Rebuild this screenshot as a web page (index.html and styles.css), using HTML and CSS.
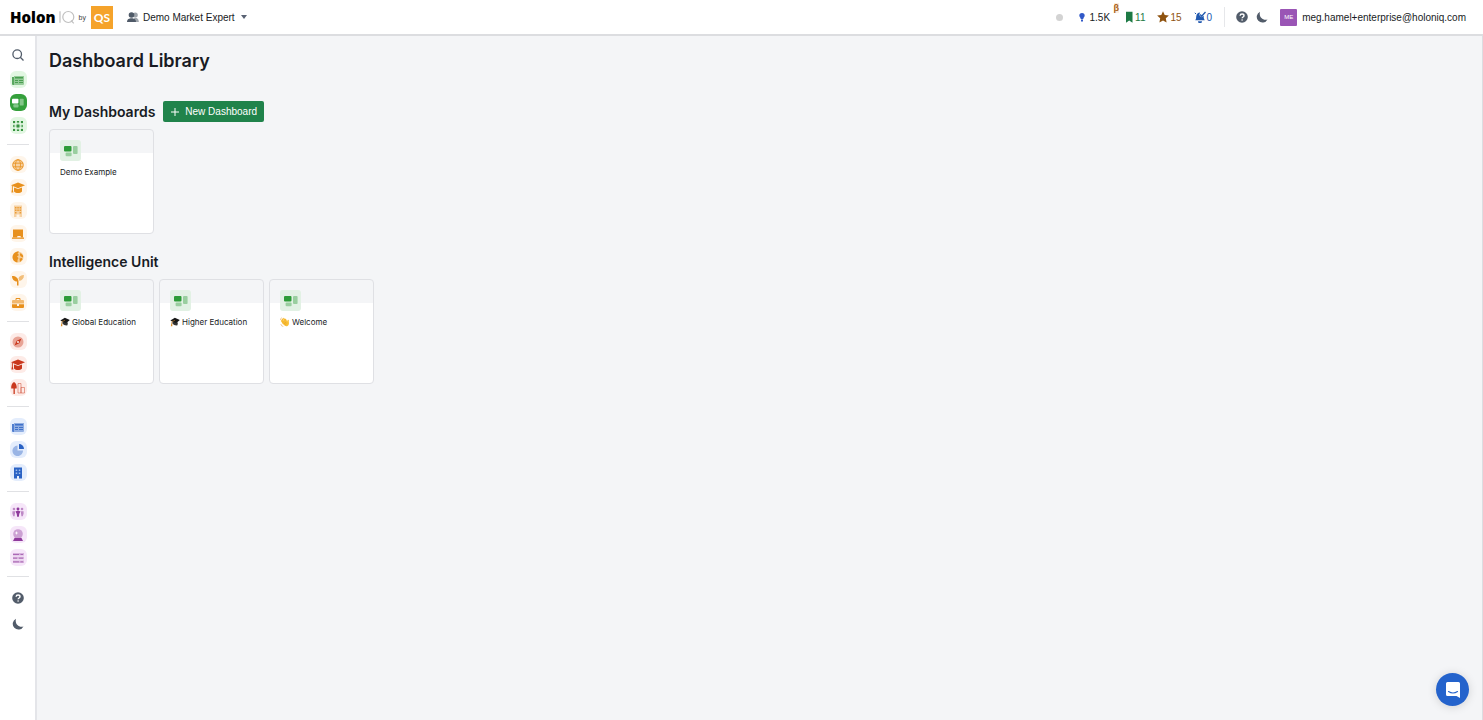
FILE: index.html
```
<!DOCTYPE html>
<html lang="en">
<head>
  <meta charset="UTF-8">
  <meta name="viewport" content="width=device-width, initial-scale=1">
  <title>Dashboard Library</title>
  <link rel="stylesheet" href="styles.css">
</head>
<body>
  <!-- shared icons -->
  <svg class="sprite" aria-hidden="true">
    <symbol id="dashboard" viewBox="0 0 14 12">
      <rect x="0" y="1" width="7.5" height="5.5" rx="1"/>
      <rect x="9" y="1" width="4.6" height="8" rx="1" opacity=".4"/>
      <rect x="1.6" y="7.6" width="6" height="3.6" rx="1" opacity=".4"/>
    </symbol>
    <symbol id="news" viewBox="0 0 12 12">
      <path d="M0 3h2v8H1a1 1 0 0 1-1-1z" opacity=".8"/>
      <path d="M2 2h10v8a1 1 0 0 1-1 1H2z" opacity=".45"/>
      <path d="M3 3h8v1.600H3zM3 6h3v1H3zM7 6h4v1H7zM3 8h3v1H3zM7 8h4v1H7z" opacity=".8"/>
    </symbol>
    <symbol id="cap" viewBox="0 0 14 12">
      <path d="M7 .5 14 3.300 7 6.200 0 3.300z"/>
      <path d="M3 5.400 7 7l4-1.600v4c-2 2-6 2-8 0z"/>
      <path d="M.9 4h.9v3.400l.6 3H.4l.5-3z"/>
    </symbol>
    <symbol id="help" viewBox="0 0 12 12">
      <circle cx="6" cy="6" r="5.800"/>
      <path d="M4.100 4.700C4.200 2.400 8 2.400 8 4.700 8 6 6.100 6 6.100 7.300" fill="none" stroke="#fff" stroke-width="1.400"/>
      <circle cx="6.100" cy="9" r=".8" fill="#fff"/>
    </symbol>
    <symbol id="moon" viewBox="0 0 12 12">
      <path d="M4 .7A5.700 5.700 0 1 0 11.500 8.500C7 10 2.500 6 4 .7z"/>
    </symbol>
    <symbol id="grad" viewBox="0 0 12 12">
      <path d="M2.800 5.500 9.500 6.500 9 10Q5 10.500 3 8z" fill="#343434"/>
      <path d="M.4 4.300 5.800 1 11.800 3.500 7.300 7.500z" fill="#171717"/>
      <path d="M6 4 2.200 5.500 2 8.500" fill="none" stroke="#c07a20" stroke-width=".7"/>
      <path d="M1.500 8h1.200l.1 3H1z" fill="#d98a22"/>
    </symbol>
  </svg>

  <header class="topbar">
    <a class="logo" href="#" aria-label="Holon IQ by QS">
      <span class="logo-name">Holon</span>
      <svg class="logo-iq" viewBox="0 0 16 16"><path d="M1 2.200v11.600M12 11.500 14.800 14.300"/><circle cx="9.300" cy="8" r="5.500"/></svg>
      <span class="logo-by">by</span>
      <span class="logo-qs">QS</span>
    </a>
    <button class="workspace" type="button">
      <svg class="icon-people" viewBox="0 0 12 12">
        <g opacity=".55"><circle cx="8.300" cy="4" r="2.500"/><path d="M7 7c3-.8 4.800 1 4.800 4H8z"/></g>
        <circle cx="4.500" cy="4" r="2.800"/><path d="M0 11C0 8 2.200 7.200 4.500 7.200S9 8 9 11z"/>
      </svg>
      Demo Market Expert
      <span class="caret"></span>
    </button>

    <div class="topbar-right">
      <span class="status"></span>
      <a class="stat credits" href="#">
        <svg viewBox="0 0 8 12" class="icon-bulb"><path d="M4 2a2.700 2.700 0 0 1 2.700 2.700C6.700 6 5.300 6.500 5.300 8H2.700C2.700 6.500 1.300 6 1.300 4.700A2.700 2.700 0 0 1 4 2z"/><path d="M3 8.500h2V10L4 11 3 10z"/></svg>
        1.5K<sup class="beta">β</sup>
      </a>
      <a class="stat saved" href="#">
        <svg viewBox="0 0 8 12" class="icon-mark"><path d="M1 .8h6.500v11L4.200 9.500 1 11.800z"/></svg>
        11
      </a>
      <a class="stat starred" href="#">
        <svg viewBox="0 0 12 12"><path d="m6 .2 1.700 3.700 4.200.5-3.100 2.800.8 4.300L6 9.400l-3.600 2.100.8-4.300L.1 4.400l4.200-.5z"/></svg>
        15
      </a>
      <a class="stat alerts" href="#">
        <svg viewBox="0 0 12 12"><path d="M1.200 9.300C2.300 8 2 7 2.300 5 2.600 2.800 4 1.600 6 1.500L5.300 4l2 2.200 2.500-1.400C9.500 7 10 8 10.800 9.300z"/><path d="M4 10.200h4a2 2 0 0 1-4 0z"/><path d="m6.200 3.500 1.500 1.700L11.500 1" fill="none" stroke="currentColor" stroke-width="1.300"/><path d="M.8 1.800 2 3" stroke="currentColor"/></svg>
        0
      </a>
      <span class="divider"></span>
      <button class="tool" type="button" aria-label="Help"><svg><use href="#help"/></svg></button>
      <button class="tool" type="button" aria-label="Dark mode"><svg><use href="#moon"/></svg></button>
      <button class="account" type="button"><span class="avatar">ME</span>meg.hamel+enterprise@holoniq.com</button>
    </div>
  </header>

  <div class="layout">
    <nav class="sidebar" aria-label="Main">
      <a class="nav-tool" href="#" aria-label="Search"><svg viewBox="0 0 12 12" class="icon-search"><circle cx="5.200" cy="5.200" r="4.300"/><path d="m8.300 8.300 3.200 3.200"/></svg></a>
      <div class="nav-group green">
        <a href="#" aria-label="News"><span><svg><use href="#news"/></svg></span></a>
        <a href="#" class="active" aria-label="Dashboards"><span><svg><use href="#dashboard"/></svg></span></a>
        <a href="#" aria-label="Network"><span><svg viewBox="0 0 12 12"><path d="M1 1h2v2H1zM5 1h2v1.500H5zM9 1h2v2H9zM1 5.200h1.500v1.600H1zM4.500 4.500h3v3h-3zM9.500 5.200H11v1.600H9.500zM1 9h2v2H1zM5 9.500h2V11H5zM9 9h2v2H9z"/><path d="M2 2h8v8H2zM6 2v8M2 6h8" fill="none" stroke="currentColor" stroke-width=".5" opacity=".5"/></svg></span></a>
      </div>
      <div class="nav-group orange">
        <a href="#" aria-label="Global"><span><svg viewBox="0 0 12 12"><circle cx="6" cy="6" r="5.500" opacity=".35"/><g fill="none" stroke="currentColor" stroke-width=".8"><circle cx="6" cy="6" r="5.300"/><ellipse cx="6" cy="6" rx="2.500" ry="5.300"/><path d="M1 4.200h10M1 7.800h10"/></g></svg></span></a>
        <a href="#" aria-label="Education"><span><svg class="wide"><use href="#cap"/></svg></span></a>
        <a href="#" aria-label="Companies"><span><svg viewBox="0 0 12 12"><path d="M2 .5h8V12H7.500V9.500h-3V12H2z" opacity=".35"/><path d="M3 2h1.500v1.500H3zM5.300 2h1.500v1.500H5.300zM7.600 2h1.500v1.500H7.600zM3 4.500h1.500V6H3zM5.300 4.500h1.500V6H5.300zM7.600 4.500h1.500V6H7.600zM3 7h1.500v1.500H3zM7.600 7h1.500v1.500H7.600z" opacity=".8"/></svg></span></a>
        <a href="#" aria-label="Classroom"><span><svg viewBox="0 0 12 12"><path d="M1 1.500h10v8H9L8.500 8h-3L5 9.500H1z"/><path d="M0 9.500h12v1.300H0z"/></svg></span></a>
        <a href="#" aria-label="Regions"><span><svg viewBox="0 0 12 12"><circle cx="6" cy="6" r="5.500" opacity=".4"/><path d="M2 2.500C4 .5 6 .3 7 .7L5.500 2.500 7 4 5 5.500 6.500 7 5.500 9 5.500 11.300C1 11-1 6 2 2.500zM8.500 2 11 4.500 11 6.500 9 5.500 7.800 4zM7.500 7.500l2.500-.5.5 1.500L8 11z"/></svg></span></a>
        <a href="#" aria-label="Climate"><span><svg viewBox="0 0 12 12"><path d="M0 2c4 0 6 2 6.500 5v4.500H5V7.500C2 7.500 0 5 0 2z"/><path d="M12 1C9 1 7 2.500 6.500 4.500L7.500 7C10 6.500 12 4 12 1z" opacity=".55"/></svg></span></a>
        <a href="#" aria-label="Workforce"><span><svg viewBox="0 0 12 12"><path d="M0 4a1 1 0 0 1 1-1h10a1 1 0 0 1 1 1v2.500H0z" opacity=".6"/><path d="M0 7.300h5V9h2V7.300h5V10a1 1 0 0 1-1 1H1a1 1 0 0 1-1-1z"/><path d="M4 3V1.500h4V3" fill="none" stroke="currentColor"/></svg></span></a>
      </div>
      <div class="nav-group red">
        <a href="#" aria-label="Explore"><span><svg viewBox="0 0 12 12"><circle cx="6" cy="6" r="5.500" opacity=".4"/><path d="M9.500 2.500 7.300 7.300 2.500 9.500l2.200-4.800z"/><circle cx="6" cy="6" r=".9" fill="#fff"/></svg></span></a>
        <a href="#" aria-label="Higher education"><span><svg class="wide"><use href="#cap"/></svg></span></a>
        <a href="#" aria-label="Cities"><span><svg class="wide" viewBox="0 0 14 12"><path d="M3 0c2 1 3 3.500 2.700 6.500H3.800V12H2.500V6.500H.2C0 3.500 1 1 3 0z"/><path d="M7 1.500h3V11H7zM10 5.500h3.500V11H10z" fill="none" stroke="currentColor" opacity=".45"/></svg></span></a>
      </div>
      <div class="nav-group blue">
        <a href="#" aria-label="Briefings"><span><svg><use href="#news"/></svg></span></a>
        <a href="#" aria-label="Charts"><span><svg viewBox="0 0 12 12"><path d="M5.500 1.500v5h5.500A5.300 5.300 0 1 1 5.500 1.500z" opacity=".4"/><path d="M7 0a5 5 0 0 1 5 5H7z"/></svg></span></a>
        <a href="#" aria-label="Organisations"><span><svg viewBox="0 0 12 12"><path d="M2 .5h8v11H7V9H5v2.500H2z"/><path d="M3.700 2.500h1.500V4H3.700zM6.800 2.500h1.500V4H6.800zM3.700 5.500h1.500V7H3.700zM6.800 5.500h1.500V7H6.800z" fill="#9fbdec"/></svg></span></a>
      </div>
      <div class="nav-group purple">
        <a href="#" aria-label="Community"><span><svg viewBox="0 0 14 12"><g opacity=".55"><circle cx="2.300" cy="2.500" r="1.500"/><path d="M.5 5h3v2.500L3 11H1.500L.5 8z"/><circle cx="11.700" cy="2.500" r="1.500"/><path d="M10.500 5h3v3l-1 3H11l-.5-3.500z"/></g><circle cx="7" cy="2.500" r="1.700"/><path d="M4 5.300c2-1 4-1 6 0L8.500 8 8 11.500H6L5.500 8z"/></svg></span></a>
        <a href="#" aria-label="Forecasts"><span><svg viewBox="0 0 12 12"><circle cx="6" cy="5" r="4.800" opacity=".4"/><path d="M2.500 9h7l1.500 3H1z"/><path d="m4.500 2 .5 1.500 1.500.5L5 4.500 4.500 6 4 4.500 2.500 4 4 3.500z" fill="#fff"/></svg></span></a>
        <a href="#" aria-label="Surveys"><span><svg viewBox="0 0 12 12"><path d="M1 1h11v2.500H1zM1 4.800h11v2.500H1zM1 8.600h11v2.500H1z" opacity=".3"/><path d="M1 1.900h6v.8H1zM1 5.700h4v.8H1zM1 9.500h6v.8H1zM8.500 1.900H11v.8H8.500zM7 5.700h4v.8H7zM8.500 9.500H11v.8H8.500z" opacity=".8"/></svg></span></a>
      </div>
      <div class="nav-group">
        <a class="nav-tool" href="#" aria-label="Help"><svg><use href="#help"/></svg></a>
        <a class="nav-tool" href="#" aria-label="Dark mode"><svg><use href="#moon"/></svg></a>
      </div>
    </nav>

    <main class="content">
      <h1>Dashboard Library</h1>

      <section>
        <div class="section-head">
          <h2>My Dashboards</h2>
          <button class="btn-new" type="button">
            <svg viewBox="0 0 10 10"><path d="M5 1v8M1 5h8"/></svg>
            New Dashboard
          </button>
        </div>
        <div class="cards">
          <a class="card" href="#">
            <span class="tile"><svg><use href="#dashboard"/></svg></span>
            <span class="card-name">Demo Example</span>
          </a>
        </div>
      </section>

      <section>
        <div class="section-head">
          <h2>Intelligence Unit</h2>
        </div>
        <div class="cards">
          <a class="card" href="#">
            <span class="tile"><svg><use href="#dashboard"/></svg></span>
            <span class="card-name"><svg><use href="#grad"/></svg>Global Education</span>
          </a>
          <a class="card" href="#">
            <span class="tile"><svg><use href="#dashboard"/></svg></span>
            <span class="card-name"><svg><use href="#grad"/></svg>Higher Education</span>
          </a>
          <a class="card" href="#">
            <span class="tile"><svg><use href="#dashboard"/></svg></span>
            <span class="card-name">
              <svg viewBox="0 0 12 12">
                <path d="M4 8 1.800 4.500M5 7 2.700 2.500M6.500 6 4.500 1.800M8 6 6.500 2.800M9.500 7.500 9.800 4" fill="none" stroke="#f7b92f" stroke-width="1.600" stroke-linecap="round"/>
                <path d="M3 6.500 7.500 4.500 10.300 6Q11.500 10 8.500 11 5 11.500 3 6.500z" fill="#f9bf35"/>
                <path d="M4 7 7.300 9M5 5.500 8 7.500" stroke="#d98f1b" stroke-width=".5"/>
                <path d="M.5 3.500Q.6 1.500 2 .8M1 8.500Q1.500 11 4 11.500" fill="none" stroke="#e7a04a" stroke-width=".7"/>
              </svg>Welcome</span>
          </a>
        </div>
      </section>
    </main>
  </div>

  <button class="chat" type="button" aria-label="Open chat">
    <svg viewBox="0 0 16 18"><path d="M2.500 1h11A1.500 1.500 0 0 1 15 2.500V17l-3.500-2h-9A1.500 1.500 0 0 1 1 13.500v-11A1.500 1.500 0 0 1 2.500 1z" fill="#fff"/><path d="M3.500 10.500q4.500 3 9 0" fill="none" stroke="#2463cc" stroke-width="1.100" stroke-linecap="round"/></svg>
  </button>
</body>
</html>
```

FILE: styles.css
```
* {
  box-sizing: border-box;
}
body {
  margin: 0;
  min-height: 100vh;
  display: flex;
  flex-direction: column;
  font-family: "Liberation Sans", Arial, sans-serif;
  font-size: 10px;
  color: #181b24;
  background-color: #f4f5f7;
}
a {
  color: inherit;
  text-decoration: none;
}
button {
  font: inherit;
  color: inherit;
  background: none;
  border: 0;
  padding: 0;
  cursor: pointer;
}
svg {
  display: block;
  width: 12px;
  height: 12px;
  fill: currentColor;
}
.sprite {
  position: absolute;
  width: 0;
  height: 0;
}

/* top bar */
.topbar {
  display: flex;
  align-items: center;
  height: 36px;
  padding: 0 17px 0 10px;
  background: #fff;
  border-bottom: 2px solid #dcdde0;
}
.logo {
  display: flex;
  align-items: center;
  margin-right: 14px;
}
.logo-name {
  font: 800 15px/20px "Open Sans", sans-serif;
  color: #000;
}
.logo-iq {
  width: 16px;
  height: 16px;
  margin-left: 3px;
  fill: none;
  stroke: #c0c0c0;
  stroke-width: 1.2;
}
.logo-by {
  margin: 0 5px 0 4px;
  font-size: 7px;
  color: #444;
}
.logo-qs {
  width: 22px;
  height: 23px;
  background: #f5a32b;
  color: #fff;
  font: 700 12px/23px Lato, sans-serif;
  text-align: center;
}
.workspace {
  display: flex;
  align-items: center;
  gap: 4px;
}
.icon-people {
  color: #4f5a68;
}
.caret {
  margin-left: 2px;
  border: 3px solid transparent;
  border-top: 4px solid #596273;
  border-bottom: 0;
}
.topbar-right {
  display: flex;
  align-items: center;
  margin-left: auto;
}
.status {
  width: 7px;
  height: 7px;
  margin-right: 15px;
  border-radius: 50%;
  background: #d3d3d3;
}
.stat {
  position: relative;
  display: flex;
  align-items: center;
  gap: 1px;
  margin-right: 12px;
}
.icon-bulb,
.icon-mark {
  width: 8px;
}
.credits {
  gap: 3px;
}
.saved {
  gap: 2px;
}
.credits svg {
  color: #3058c8;
}
.beta {
  position: absolute;
  top: -8px;
  right: -6px;
  font-size: 9px;
  line-height: 10px;
  font-weight: 600;
  color: #a85e16;
  background: #fdeedd;
}
.saved {
  color: #1d7a45;
}
.starred {
  color: #8f5310;
}
.alerts {
  color: #2159b0;
}
.divider {
  height: 20px;
  border-left: 1px solid #e6e7ea;
}
.tool {
  margin-left: 8px;
  color: #525c6a;
}
.tool:first-of-type {
  margin-left: 11px;
}
.account {
  display: flex;
  align-items: center;
  gap: 5px;
  margin-left: 12px;
}
.avatar {
  width: 17px;
  height: 17px;
  border-radius: 1px;
  background: #9a55b5;
  color: #fff;
  font-size: 6px;
  line-height: 17px;
}

/* side navigation */
.layout {
  display: flex;
  flex: 1;
}
.sidebar {
  flex: none;
  width: 37px;
  padding-top: 6px;
  background: #fff;
  border-right: 2px solid #e4e5e9;
}
.nav-group {
  padding: 8px 0 7px;
}
.nav-group::before {
  content: "";
  display: block;
  height: 1px;
  margin: -8px 6px 8px 7px;
  background: #e0e1e4;
}
.nav-group.green {
  padding-top: 0;
}
.nav-group.green::before {
  display: none;
}
.nav-group a {
  display: flex;
  align-items: center;
  justify-content: center;
  height: 23px;
  padding-left: 1px;
}
.nav-group span {
  display: flex;
  align-items: center;
  justify-content: center;
  width: 17px;
  height: 17px;
  border-radius: 6px;
}
.nav-group .wide {
  width: 14px;
}
.sidebar a.nav-tool {
  display: flex;
  align-items: center;
  justify-content: center;
  height: 26px;
  padding-left: 1px;
  color: #525c6a;
}
.icon-search {
  fill: none;
  stroke: currentColor;
  stroke-width: 1.3;
}
.green {
  color: #37943f;
}
.green span {
  background: #e2f7e2;
}
.green .active span {
  background: #35a03c;
  color: #fff;
}
.orange {
  color: #e8901c;
}
.orange span {
  background: #fef5ea;
}
.red {
  color: #c9371c;
}
.red span {
  background: #fdebe7;
}
.blue {
  color: #2a62c4;
}
.blue span {
  background: #e4edfc;
}
.purple {
  color: #8f3a9c;
}
.purple span {
  background: #f6e6f9;
}

/* page */
.content {
  flex: 1;
  padding: 13px 12px;
  border-right: 1px solid #dcdde1;
}
h1,
h2,
.card-name {
  font-family: Inter, "Liberation Sans", sans-serif;
}
h1 {
  margin: 0 0 28px;
  font-size: 18px;
  line-height: 24px;
  font-weight: 600;
}
h2 {
  margin: 0;
  font-size: 14px;
  line-height: 21px;
  font-weight: 600;
}
section {
  margin-bottom: 17px;
}
.section-head {
  display: flex;
  align-items: center;
  gap: 8px;
  margin-bottom: 7px;
}
.btn-new {
  display: flex;
  align-items: center;
  gap: 5px;
  height: 21px;
  padding: 0 7px;
  border-radius: 2px;
  background: #20834b;
  color: #fff;
}
.btn-new svg {
  width: 10px;
  height: 10px;
  stroke: #fff;
}
.cards {
  display: flex;
  flex-wrap: wrap;
  gap: 5px;
}
.card {
  width: 105px;
  height: 105px;
  padding: 10px;
  border: 1px solid #dfe0e4;
  border-radius: 4px;
  background: linear-gradient(#f4f5f7 23px, #fff 23px);
}
.tile {
  display: flex;
  align-items: center;
  justify-content: center;
  width: 21px;
  height: 21px;
  border-radius: 3px;
  background: #e2f1e4;
  color: #2d9c38;
}
.tile svg {
  width: 14px;
}
.card-name {
  display: flex;
  align-items: center;
  gap: 2px;
  margin-top: 5px;
  font-size: 8px;
  line-height: 12px;
  white-space: nowrap;
}
.card-name svg {
  width: 10px;
  height: 10px;
}

/* chat launcher */
.chat {
  position: fixed;
  right: 14px;
  bottom: 14px;
  display: flex;
  align-items: center;
  justify-content: center;
  width: 33px;
  height: 33px;
  border-radius: 50%;
  background: #2463cc;
  box-shadow: 0 1px 10px rgba(0, 0, 0, 0.15);
}
.chat svg {
  width: 16px;
  height: 18px;
}
```
